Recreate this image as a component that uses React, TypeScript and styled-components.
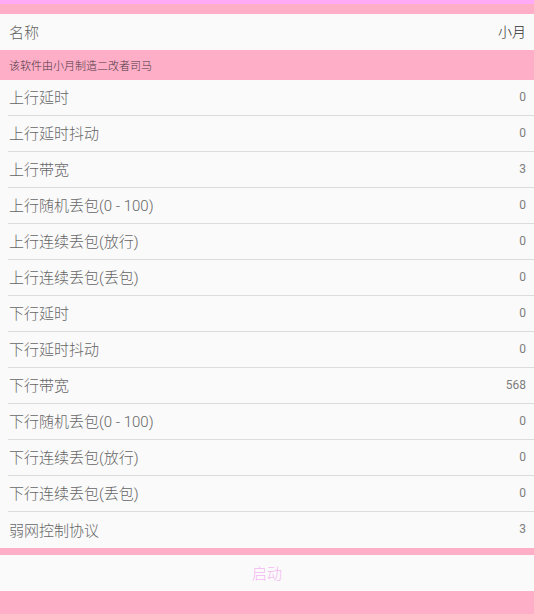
import styled, { createGlobalStyle } from "styled-components";

// ============ Styled Components ============

const GlobalStyle = createGlobalStyle`
  html, body {
    margin: 0;
    padding: 0;
    background-color: #ffaec8;
  }

  body {
    font-family: Roboto, "Noto Sans CJK SC", sans-serif;
  }
`;

const Screen = styled.div`
  width: 534px;
  height: 614px;
  display: flex;
  flex-direction: column;
  background-color: #ffaec8;
  overflow: hidden;
`;

const StatusStrip = styled.div`
  height: 4px;
  background-color: #ffaaf6;
`;

const Spacer = styled.div<{ $h: number }>`
  height: ${(p) => p.$h}px;
  flex-shrink: 0;
`;

const NameRow = styled.div`
  height: 36px;
  display: flex;
  align-items: center;
  justify-content: space-between;
  padding: 0 8px 2px 9px;
  box-sizing: border-box;
  background-color: #fafafa;
`;

const NameLabel = styled.span`
  font-size: 15px;
  font-weight: 300;
  color: #5f5f5f;
`;

const NameValue = styled.span`
  font-size: 14px;
  font-weight: 300;
  color: #2e2e2e;
`;

const Banner = styled.div`
  height: 30px;
  display: flex;
  align-items: center;
  padding: 0 9px;
  font-size: 11px;
  font-weight: 300;
  color: #4a3840;
`;

const List = styled.div`
  display: flex;
  flex-direction: column;
  background-color: #fafafa;
`;

const Row = styled.div<{ $last?: boolean }>`
  height: 36px;
  display: flex;
  align-items: center;
  justify-content: space-between;
  margin-left: 8px;
  padding: 0 8px 2px 1px;
  box-sizing: border-box;
  border-bottom: ${(p) => (p.$last ? "none" : "1px solid #dcdcdc")};
`;

const Label = styled.span`
  font-size: 15px;
  font-weight: 300;
  color: #666666;
`;

const Value = styled.span`
  font-size: 12px;
  color: #7e7e7e;
`;

const StartButton = styled.button`
  height: 36px;
  border: none;
  background-color: #fafafa;
  color: #f4b8f2;
  font-family: inherit;
  font-size: 15px;
  font-weight: 300;
  padding: 0 0 2px;
  cursor: pointer;
`;

// ============ Component ============

const rows: [string, string][] = [
  ["上行延时", "0"],
  ["上行延时抖动", "0"],
  ["上行带宽", "3"],
  ["上行随机丢包(0 - 100)", "0"],
  ["上行连续丢包(放行)", "0"],
  ["上行连续丢包(丢包)", "0"],
  ["下行延时", "0"],
  ["下行延时抖动", "0"],
  ["下行带宽", "568"],
  ["下行随机丢包(0 - 100)", "0"],
  ["下行连续丢包(放行)", "0"],
  ["下行连续丢包(丢包)", "0"],
  ["弱网控制协议", "3"],
];

export default function App() {
  return (
    <>
      <GlobalStyle />
      <Screen>
        <StatusStrip />
        <Spacer $h={10} />
        <NameRow>
          <NameLabel>名称</NameLabel>
          <NameValue>小月</NameValue>
        </NameRow>
        <Banner>该软件由小月制造二改者司马</Banner>
        <List>
          {rows.map(([label, value], i) => (
            <Row key={label} $last={i === rows.length - 1}>
              <Label>{label}</Label>
              <Value>{value}</Value>
            </Row>
          ))}
        </List>
        <Spacer $h={7} />
        <StartButton>启动</StartButton>
      </Screen>
    </>
  );
}
